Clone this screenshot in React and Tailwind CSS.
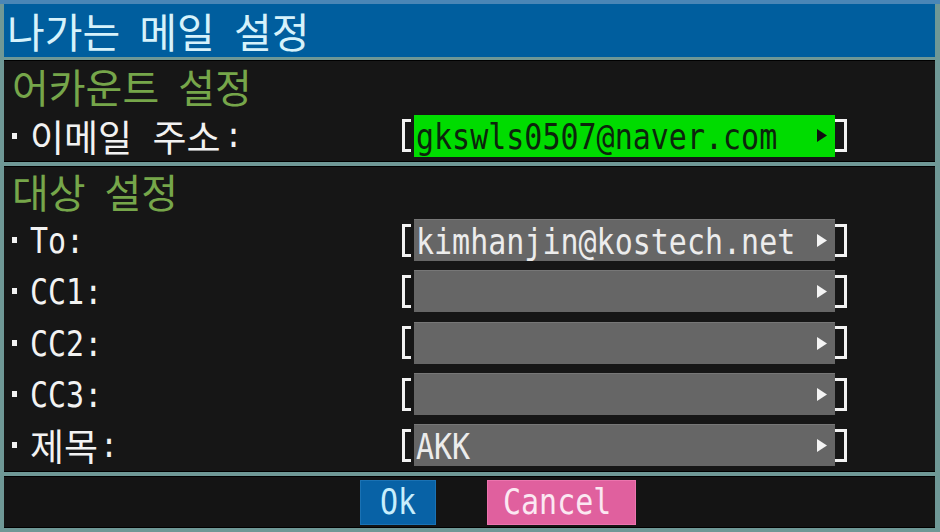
import React from 'react';

const KR = { fontFamily: '"Noto Sans CJK KR", "Noto Sans", sans-serif' };

// 좁고 키가 큰 픽셀 글꼴 느낌: 30px 고정폭 글꼴을 세로로 늘림
const Mono = ({ children, className = '' }) => (
    <span
        className={`inline-block scale-y-[1.2] text-[30px] leading-none whitespace-pre ${className}`}
        style={{ fontFamily: '"DejaVu Sans Mono", "Liberation Mono", monospace' }}
    >
        {children}
    </span>
);

const Arrow = ({ color }) => (
    <svg width="12" height="13" viewBox="0 0 12 13" className="shrink-0">
        <polygon points="1,0 11,6.5 1,13" fill={color} />
    </svg>
);

const Field = ({ value, active }) => (
    <div className="flex items-center h-full">
        {/* 왼쪽 괄호 */}
        <div className="w-[9px] h-[33px] border-l-[3px] border-y-[3px] border-[#f2f2f2] mr-[3px] shrink-0" />
        <div
            className={`w-[421px] h-[42px] flex items-center justify-between pl-[2px] pr-[7px] shrink-0 ${
                active
                    ? 'bg-[#00dc00] text-[#0c250c]'
                    : 'bg-[#666666] text-[#ececec] border-t border-[#777777]'
            }`}
        >
            <Mono className="mt-[2px]">{value}</Mono>
            <Arrow color={active ? '#101010' : '#f4f4f4'} />
        </div>
        {/* 오른쪽 괄호 */}
        <div className="w-[12px] h-[33px] border-r-[3px] border-y-[3px] border-[#f2f2f2] shrink-0" />
    </div>
);

const Label = ({ children, korean, colonGap = 8 }) => (
    <div className="flex items-center w-[398px] pl-[8px] text-[#f2f2f2] shrink-0">
        <span className="w-[5px] h-[6px] bg-[#f2f2f2] mr-[13px] shrink-0" />
        {korean ? (
            <>
                <span className="text-[37px] leading-[40px] [word-spacing:12px]" style={KR}>
                    {children}
                </span>
                <span style={{ marginLeft: colonGap }}>
                    <Mono>:</Mono>
                </span>
            </>
        ) : (
            <Mono className="mt-[2px]">{children}</Mono>
        )}
    </div>
);

const Row = ({ label, korean, colonGap, value, active }) => (
    <div className="flex items-center h-[51.75px]">
        <Label korean={korean} colonGap={colonGap}>{label}</Label>
        <Field value={value} active={active} />
    </div>
);

const SectionTitle = ({ children }) => (
    <div
        className="pl-[8px] text-[40px] leading-[42px] text-[#76a64a] [word-spacing:10px]"
        style={KR}
    >
        {children}
    </div>
);

const App = () => {
    const targets = [
        { label: 'To:', value: 'kimhanjin@kostech.net' },
        { label: 'CC1:', value: '' },
        { label: 'CC2:', value: '' },
        { label: 'CC3:', value: '' },
        { label: '제목', korean: true, colonGap: 2, value: 'AKK' },
    ];

    return (
        <div className="w-[940px] h-[532px] bg-[#6f9896] flex flex-col overflow-hidden">
            {/* 상단 띠 */}
            <div className="h-[4px] bg-[#4a86b6] shrink-0" />

            {/* 제목 표시줄 */}
            <div className="ml-[4px] mr-[5px] h-[53px] bg-[#005e9e] flex items-center pl-[3px] shrink-0">
                <span className="text-[41px] leading-none text-[#d6f2fb] [word-spacing:10px]" style={KR}>
                    나가는 메일 설정
                </span>
            </div>

            {/* 어카운트 설정 */}
            <div className="ml-[4px] mr-[5px] mt-[3px] h-[102px] bg-[#161616] border-y border-black flex flex-col shrink-0">
                <div className="h-[50px] flex items-center">
                    <SectionTitle>어카운트 설정</SectionTitle>
                </div>
                <Row label="이메일 주소" korean colonGap={4} value="gkswls0507@naver.com" active />
            </div>

            {/* 대상 설정 */}
            <div className="ml-[4px] mr-[5px] mt-[4px] h-[306px] bg-[#161616] border-y border-black flex flex-col shrink-0">
                <div className="h-[48px] flex items-center">
                    <SectionTitle>대상 설정</SectionTitle>
                </div>
                {targets.map(t => (
                    <Row key={t.label} {...t} />
                ))}
            </div>

            {/* 버튼 */}
            <div className="ml-[4px] mr-[5px] mt-[4px] h-[52px] bg-[#141414] border-y border-black flex items-center shrink-0">
                <div className="ml-[356px] w-[76px] h-[45px] bg-[#0862a6] border border-[#1a72b4] flex items-center justify-center text-[#c8eefc]">
                    <Mono>Ok</Mono>
                </div>
                <div className="ml-[51px] w-[149px] h-[45px] bg-[#e0609e] border border-[#ec74ae] flex items-center pl-[15px] text-[#fbe8f2]">
                    <Mono>Cancel</Mono>
                </div>
            </div>
        </div>
    );
};

export default App;
